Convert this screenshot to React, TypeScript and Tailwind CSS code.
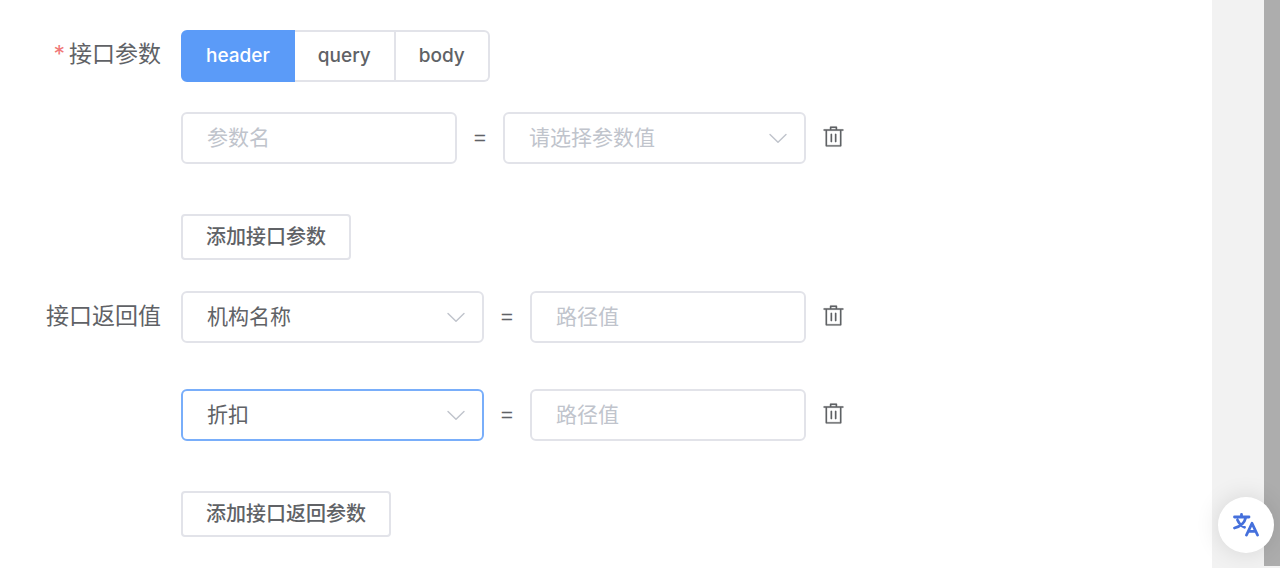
import React, { useState } from 'react';

const PARAM_TYPES = ['header', 'query', 'body'];
const RETURN_FIELDS = ['机构名称', '折扣'];

interface ReturnRow {
    field: string;
    path: string;
}

interface ParamRow {
    name: string;
    value: string;
}

const TrashIcon: React.FC = () => (
    <svg viewBox="0 0 1024 1024" className="h-[23px] w-[23px]" fill="currentColor" stroke="currentColor" strokeWidth="10" aria-hidden="true">
        <path d="M160 256H96a32 32 0 0 1 0-64h256V95.936a32 32 0 0 1 32-32h256a32 32 0 0 1 32 32V192h256a32 32 0 1 1 0 64h-64v672a32 32 0 0 1-32 32H192a32 32 0 0 1-32-32V256zm448-64v-64H416v64h192zM224 896h576V256H224v640zm192-128a32 32 0 0 1-32-32V416a32 32 0 0 1 64 0v320a32 32 0 0 1-32 32zm192 0a32 32 0 0 1-32-32V416a32 32 0 0 1 64 0v320a32 32 0 0 1-32 32z" />
    </svg>
);

const ChevronIcon: React.FC = () => (
    <svg viewBox="0 0 1024 1024" className="pointer-events-none absolute inset-y-0 right-4 my-auto h-6 w-6 text-[#c0c4cc]" fill="currentColor" aria-hidden="true">
        <path d="M831.872 340.864 512 652.672 192.128 340.864a30.592 30.592 0 0 0-42.752 0 29.12 29.12 0 0 0 0 41.6L489.664 714.24a32 32 0 0 0 44.672 0l340.288-331.712a29.12 29.12 0 0 0 0-41.728 30.592 30.592 0 0 0-42.752 0z" />
    </svg>
);

const TranslateIcon: React.FC = () => (
    <svg viewBox="0 0 26 24" className="h-6 w-[26px]" fill="none" stroke="currentColor" strokeWidth="2.8" strokeLinecap="round" strokeLinejoin="round" aria-hidden="true">
        <path d="M1.5 4h14.500M8.500 1.500V4M12.800 4.500C11.500 10 7.500 13.500 1.500 15M4.500 7C6 10.500 8.500 13 11.500 14.200" />
        <path d="M13.500 22 19 10.300l5.500 11.700M15.500 18.300h7" />
    </svg>
);

interface SelectBoxProps {
    label: string;
    value: string;
    options: string[];
    placeholder?: string;
    active?: boolean;
    onChange: (value: string) => void;
}

const SelectBox: React.FC<SelectBoxProps> = ({ label, value, options, placeholder, active, onChange }) => (
    <div className="relative w-[303px]">
        <select
            aria-label={label}
            value={value}
            onChange={(e) => onChange(e.target.value)}
            className={`h-13 w-full appearance-none rounded-md border-2 bg-white px-6 text-[21px] outline-none focus:border-[#5b9bf8] ${active ? 'border-[#79aefa]' : 'border-[#e2e3e9]'} ${value ? 'text-[#606266]' : 'text-[#c0c4cc]'}`}
        >
            {placeholder && <option value="">{placeholder}</option>}
            {options.map(o => <option key={o} value={o}>{o}</option>)}
        </select>
        <ChevronIcon />
    </div>
);

interface TextBoxProps {
    label: string;
    value: string;
    placeholder: string;
    onChange: (value: string) => void;
}

const TextBox: React.FC<TextBoxProps> = ({ label, value, placeholder, onChange }) => (
    <input
        type="text"
        aria-label={label}
        value={value}
        placeholder={placeholder}
        onChange={(e) => onChange(e.target.value)}
        className="h-13 w-[276px] rounded-md border-2 border-[#e2e3e9] bg-white px-6 pb-0.5 text-[21px] text-[#606266] outline-none placeholder:text-[#c0c4cc] focus:border-[#5b9bf8]"
    />
);

const Equals: React.FC = () => (
    <span className="w-[46px] text-center font-['Liberation_Sans',sans-serif] text-[21px]">=</span>
);

const DeleteButton: React.FC<{ onClick: () => void }> = ({ onClick }) => (
    <button type="button" aria-label="删除" onClick={onClick} className="ml-4 pb-1 hover:text-[#5b9bf8]">
        <TrashIcon />
    </button>
);

const AddButton: React.FC<{ onClick: () => void; children: React.ReactNode }> = ({ onClick, children }) => (
    <button
        type="button"
        onClick={onClick}
        className="h-[46px] rounded-[4px] border-2 border-[#e2e3e9] bg-white px-[23px] text-[20px] font-medium hover:border-[#5b9bf8]"
    >
        {children}
    </button>
);

const App: React.FC = () => {
    const [paramType, setParamType] = useState('header');
    const [params, setParams] = useState<ParamRow[]>([{ name: '', value: '' }]);
    const [returns, setReturns] = useState<ReturnRow[]>([
        { field: '机构名称', path: '' },
        { field: '折扣', path: '' },
    ]);

    const updateParam = (index: number, patch: Partial<ParamRow>) => {
        setParams(prev => prev.map((p, i) => (i === index ? { ...p, ...patch } : p)));
    };

    const updateReturn = (index: number, patch: Partial<ReturnRow>) => {
        setReturns(prev => prev.map((r, i) => (i === index ? { ...r, ...patch } : r)));
    };

    return (
        <div className="flex min-h-screen bg-[#f2f2f2] font-['Inter','Noto_Sans_CJK_SC',sans-serif] text-[#606266]">
            <main className="flex-1 bg-white pt-[30px]">
                <form onSubmit={(e) => e.preventDefault()}>
                    {/* Request params */}
                    <fieldset className="flex">
                        <div id="param-label" className="w-[181px] shrink-0 pr-5 text-right text-[23px] leading-[48px]">
                            <span className="mr-1 text-[#f07878]">*</span>接口参数
                        </div>
                        <div>
                            <div role="radiogroup" aria-labelledby="param-label" className="flex">
                                {PARAM_TYPES.map(t => (
                                    <label
                                        key={t}
                                        className={`flex h-13 cursor-pointer items-center border-y-2 border-r-2 px-[23px] text-[19px] font-medium first:rounded-l-md first:border-l-2 last:rounded-r-md ${paramType === t ? 'border-[#5b9bf8] bg-[#5b9bf8] text-white' : 'border-[#e2e3e9] bg-white'}`}
                                    >
                                        <input
                                            type="radio"
                                            name="paramType"
                                            value={t}
                                            checked={paramType === t}
                                            onChange={() => setParamType(t)}
                                            className="sr-only"
                                        />
                                        {t}
                                    </label>
                                ))}
                            </div>
                            <div className="mt-[30px] flex flex-col gap-[46px]">
                                {params.map((p, i) => (
                                    <div key={i} className="flex items-center">
                                        <TextBox label="参数名" placeholder="参数名" value={p.name} onChange={(name) => updateParam(i, { name })} />
                                        <Equals />
                                        <SelectBox label="参数值" placeholder="请选择参数值" options={RETURN_FIELDS} value={p.value} onChange={(value) => updateParam(i, { value })} />
                                        <DeleteButton onClick={() => setParams(prev => prev.filter((_, n) => n !== i))} />
                                    </div>
                                ))}
                            </div>
                            <div className="mt-[50px] flex">
                                <AddButton onClick={() => setParams(prev => [...prev, { name: '', value: '' }])}>添加接口参数</AddButton>
                            </div>
                        </div>
                    </fieldset>

                    {/* Response mapping */}
                    <fieldset className="mt-[31px] flex pb-[30px]">
                        <div className="w-[181px] shrink-0 pr-5 text-right text-[23px] leading-[50px]">接口返回值</div>
                        <div>
                            <div className="flex flex-col gap-[46px]">
                                {returns.map((r, i) => (
                                    <div key={i} className="flex items-center">
                                        <SelectBox label="返回字段" options={RETURN_FIELDS} value={r.field} active={i === 1} onChange={(field) => updateReturn(i, { field })} />
                                        <Equals />
                                        <TextBox label="路径值" placeholder="路径值" value={r.path} onChange={(path) => updateReturn(i, { path })} />
                                        <DeleteButton onClick={() => setReturns(prev => prev.filter((_, n) => n !== i))} />
                                    </div>
                                ))}
                            </div>
                            <div className="mt-[50px] flex">
                                <AddButton onClick={() => setReturns(prev => [...prev, { field: '机构名称', path: '' }])}>添加接口返回参数</AddButton>
                            </div>
                        </div>
                    </fieldset>
                </form>
            </main>
            <div className="w-[52px] shrink-0" />
            <div className="mb-[2px] w-4 shrink-0 bg-[#adadad]" />

            <button
                type="button"
                aria-label="翻译"
                className="fixed right-[6px] bottom-[15px] flex h-14 w-14 items-center justify-center rounded-full bg-white text-[#4570dc] shadow-[0_0_24px_rgba(0,0,0,0.12)]"
            >
                <TranslateIcon />
            </button>
        </div>
    );
};

export default App;
